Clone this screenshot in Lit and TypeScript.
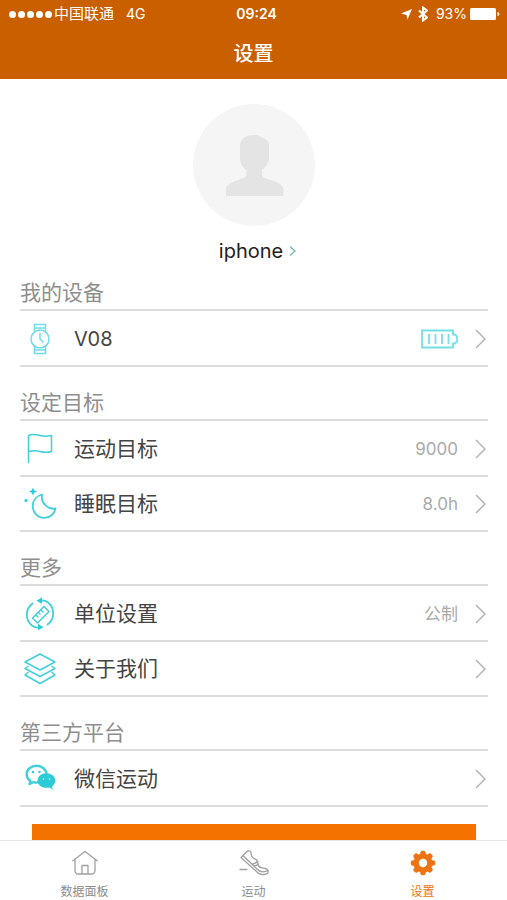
import { LitElement, html, svg, css, nothing, type TemplateResult } from "lit";
import { customElement, property, state } from "lit/decorators.js";
import { classMap } from "lit/directives/class-map.js";

interface Row {
  icon: string;
  label: string;
  value?: string;
  battery?: boolean;
}

interface Group {
  title: string;
  rows: Row[];
}

const groups: Group[] = [
  { title: "我的设备", rows: [{ icon: "watch", label: "V08", battery: true }] },
  {
    title: "设定目标",
    rows: [
      { icon: "flag", label: "运动目标", value: "9000" },
      { icon: "moon", label: "睡眠目标", value: "8.0h" },
    ],
  },
  {
    title: "更多",
    rows: [
      { icon: "ruler", label: "单位设置", value: "公制" },
      { icon: "layers", label: "关于我们" },
    ],
  },
  { title: "第三方平台", rows: [{ icon: "wechat", label: "微信运动" }] },
];

const tabs = [
  { icon: "home", label: "数据面板" },
  { icon: "shoe", label: "运动" },
  { icon: "gear", label: "设置" },
];

const rowIcons: Record<string, TemplateResult> = {
  watch: svg`
    <g class="pale"><circle cx="18" cy="18" r="9"/>
    <path d="M12.500 10.500V3.500h11v7M12.500 25.500v7h11v-7M13 7h10M13 29h10M18 12.500v5.500l3 3"/></g>`,
  flag: svg`
    <path d="M6.500 31.500V4.500c4-1.500 8-1 11.500 0s7.500 1 11.500 0v16c-4 1.200-8 1-11.500 0s-7.500-1-11.500 0"/>`,
  moon: svg`
    <path class="thick" d="M20 8.500c-5.500 1.500-9.300 6-9.300 11.500 0 6.500 5 11.800 11.600 11.800 5.500 0 10-3.700 11.200-9.300-6.500 1.500-15-4.500-13.500-14z"/>
    <path class="solid" d="M11 1.500l1.200 2.800 2.800 1.200-2.800 1.200-1.200 2.800-1.200-2.800L7 5.500l2.800-1.200z"/>
    <circle class="solid" cx="4" cy="14.500" r="1.600"/>`,
  ruler: svg`
    <path class="thick" d="M10.500 7.500C3 13 3 24 10 29.500c2 1.500 4.500 2.300 7 2M25.500 28.500C33 23 33 12 26 6.500c-2-1.500-4.500-2.300-7-2"/>
    <path d="M22 10.500l5 5-11.500 11.500-5-5z"/>
    <path d="M14 19l2 2M16.500 16.500l1.500 1.500M19 14l2 2"/>
    <path class="solid" d="M14.500 4.800l5.500-3.500v6.500zM21.500 31.200l-5.500-3.500v6.500z"/>`,
  layers: svg`
    <path d="M18 3l15 8-15 8-15-8zM6 15.500L3 17.500l15 8 15-8-3-2M6 21.500L3 24l15 8.500L33 24l-3-2.500"/>`,
  wechat: svg`
    <path class="heavy" d="M14.500 4.800c-5.500 0-9.800 3.700-9.800 8.400 0 2.900 1.300 5.100 3.700 6.600l-.9 3.200 3.700-1.900c1.200.3 2.100.5 3.300.5 5.500 0 9.800-3.700 9.800-8.400s-4.300-8.400-9.800-8.400z"/>
    <circle class="solid" cx="11" cy="11" r="1.200"/>
    <circle class="solid" cx="17.500" cy="11" r="1.200"/>
    <path class="solid" d="M24.300 12.300c-5 0-8.800 3.200-8.800 7.200s3.800 7.300 8.800 7.300c1.100 0 2-.1 3-.4l3.500 2-.8-3c2.100-1.300 3.300-3.500 3.300-5.900 0-4-4-7.200-9-7.200z"/>
    <circle class="eye" cx="21.500" cy="18" r=".9"/>
    <circle class="eye" cx="27.500" cy="18" r=".9"/>`,
};

const tabIcons: Record<string, TemplateResult> = {
  home: svg`
    <path d="M2.800 11.800L15 2.500l12.200 9.300M5 10.500v11c0 2.200 1.200 3.500 3.500 3.500h13c2.300 0 3.500-1.300 3.500-3.500v-11M12 25v-8.500h6V25"/>`,
  shoe: svg`
    <path d="M1 20.500h7M2 8.500L8.500 2c2-.5 3.500.5 3.500 2 0 2.500 1 4 2.500 5.200 2 1 3.500 1.500 4 3 .5 1.800-.3 3 1 4.800 1.500 2 4 1.800 7 2.500 2.500.7 3 3 2.200 4.500-.8 1-3 1.500-5.700 1.500-3.500 0-4.500-1.500-6-3.500z"/>
    <path d="M4 6.500L17.500 19.500c2 2.200 3.500 3.300 6 3.300 2.300 0 4-.3 5.300-1.300M13.500 15c1.500-.3 3.500-1 4.700-2.500M15 17c1.500-.2 3-.8 4.200-1.800"/>`,
  gear: svg`
    <path fill-rule="evenodd" d="M15 4.500a9.500 9.500 0 1 0 0 19 9.500 9.500 0 0 0 0-19zm0 5.300a4.200 4.200 0 1 1 0 8.400 4.200 4.200 0 0 1 0-8.400z"/>
    <g>${[0, 45, 90, 135, 180, 225, 270, 315].map(
      (a) => svg`<path d="M12 6l.5-3c.3-1.700 4.700-1.700 5 0l.5 3z" transform="rotate(${a} 15 14)"/>`
    )}</g>`,
};

@customElement("status-bar")
export class StatusBar extends LitElement {
  static styles = css`
    :host {
      display: grid;
      grid-template-columns: 1fr auto 1fr;
      align-items: center;
      height: 28px;
      padding: 0 7px 0 9px;
      font-size: 14px;
      line-height: 20px;
    }
    .side {
      display: flex;
      align-items: center;
    }
    .end {
      justify-content: flex-end;
    }
    .dots {
      display: flex;
      gap: 2px;
      margin-right: 2px;
    }
    .dot {
      width: 7px;
      height: 7px;
      border-radius: 50%;
      background: #fff;
    }
    .carrier {
      font-size: 15px;
      margin-right: 12px;
    }
    .time {
      font-weight: 600;
      margin-left: 4px;
    }
    svg {
      display: block;
      fill: #fff;
    }
    .arrow {
      margin-right: 6px;
    }
    .bluetooth {
      fill: none;
      stroke: #fff;
      stroke-width: 2;
      margin-right: 8px;
    }
    .battery {
      margin-left: 3px;
    }
  `;

  render() {
    return html`
      <div class="side">
        <span class="dots">${[0, 1, 2, 3, 4].map(() => html`<span class="dot"></span>`)}</span>
        <span class="carrier">中国联通</span>
        <span>4G</span>
      </div>
      <span class="time">09:24</span>
      <div class="side end">
        <svg class="arrow" width="11" height="11" viewBox="0 0 11 11"><path d="M11 0L6.500 10.500 5.500 6 0 4.500z"/></svg>
        <svg class="bluetooth" width="10" height="16" viewBox="0 0 10 16"><path d="M1 4.500l8 7L5 14.500v-13l4 3-8 7"/></svg>
        <span>93%</span>
        <svg class="battery" width="30" height="12" viewBox="0 0 30 12"><rect width="26" height="12" rx="1.500"/><path d="M27.500 4c2.500.5 2.500 3.500 0 4z"/></svg>
      </div>
    `;
  }
}

@customElement("setting-row")
export class SettingRow extends LitElement {
  @property({ attribute: false }) row!: Row;

  static styles = css`
    :host {
      display: block;
      border-bottom: 2px solid #dcdcdc;
    }
    button {
      display: flex;
      align-items: center;
      width: 100%;
      height: 53px;
      padding: 0 2px;
      border: 0;
      background: none;
      font: inherit;
      color: #444;
      text-align: left;
      cursor: pointer;
    }
    svg {
      display: block;
      flex: none;
      fill: none;
    }
    .icon {
      stroke: #3fd0dc;
      stroke-width: 1.5;
      stroke-linejoin: round;
      stroke-linecap: round;
    }
    .icon .solid {
      fill: #2bcbd8;
      stroke: none;
    }
    .icon .pale {
      stroke: #6fdbea;
    }
    .icon .thick {
      stroke-width: 1.8;
    }
    .icon .heavy {
      stroke-width: 2.4;
    }
    .icon .eye {
      fill: #a5e9ee;
      stroke: none;
    }
    .label {
      flex: 1;
      margin-left: 16px;
      font-size: 21px;
      line-height: 28px;
    }
    .latin {
      font-size: 20px;
    }
    .value {
      font-size: 17px;
      line-height: 24px;
      color: #aaa;
    }
    .battery {
      stroke: #74dfe7;
      stroke-width: 1.8;
    }
    .chevron {
      margin-left: 17px;
      stroke: #b4b4b4;
      stroke-width: 1.5;
    }
  `;

  render() {
    const { icon, label, value, battery } = this.row;
    const latin = /^[\x20-\x7e]+$/.test(label);
    return html`
      <button type="button">
        <svg class="icon" width="36" height="36" viewBox="0 0 36 36">${rowIcons[icon]}</svg>
        <span class=${classMap({ label: true, latin })}>${label}</span>
        ${battery
          ? html`<svg class="battery" width="37" height="20" viewBox="0 0 37 20">
              <path d="M1 1.500h31v4h2l2 2v5l-2 2h-2v4H1zM8 5v10M14.500 5v10M21 5v10M27.500 5v10"/>
            </svg>`
          : nothing}
        ${value ? html`<span class="value">${value}</span>` : nothing}
        <svg class="chevron" width="11" height="20" viewBox="0 0 11 20"><path d="M1 1l9 9-9 9"/></svg>
      </button>
    `;
  }
}

@customElement("app-root")
export class AppRoot extends LitElement {
  @state() private current = 2;

  static styles = css`
    :host {
      display: flex;
      flex-direction: column;
      height: 100vh;
      background: #fff;
      font-family: Inter, "Noto Sans CJK SC", sans-serif;
      color: #444;
    }
    .top {
      flex: none;
      background: #ca5f00;
      color: #fff;
    }
    h1 {
      margin: 0;
      padding: 12px 0 11px;
      font-size: 20px;
      line-height: 28px;
      font-weight: 500;
      text-align: center;
    }
    main {
      flex: 1;
      min-height: 0;
      overflow-y: auto;
      scrollbar-width: none;
    }
    .profile {
      display: flex;
      flex-direction: column;
      align-items: center;
      gap: 13px;
      padding: 25px 0 15px;
    }
    .name {
      display: flex;
      align-items: center;
      gap: 6px;
      padding: 0;
      border: 0;
      background: none;
      font: inherit;
      font-size: 20px;
      line-height: 24px;
      color: #222;
      margin-left: 8px;
      cursor: pointer;
    }
    .name svg {
      fill: none;
      stroke: #7fb9b6;
      stroke-width: 1.5;
    }
    .avatar {
      display: block;
    }
    .disc {
      fill: #f5f5f5;
    }
    .person {
      fill: #e4e4e4;
    }
    section {
      margin: 0 19px 21px 20px;
    }
    h2 {
      margin: 0;
      padding: 1px 0 2px;
      border-bottom: 2px solid #dcdcdc;
      font-size: 21px;
      line-height: 28px;
      font-weight: 400;
      color: #8e8e8e;
    }
    .rows {
      padding-top: 1px;
    }
    .action {
      padding: 0 31px 16px 32px;
      margin-top: -4px;
    }
    .action button {
      display: block;
      width: 100%;
      height: 52px;
      border: 0;
      background: #f37200;
    }
    nav {
      flex: none;
      display: grid;
      grid-template-columns: repeat(3, 1fr);
      border-top: 1px solid #e6e6e6;
      background: #fff;
    }
    .tab {
      display: flex;
      flex-direction: column;
      align-items: center;
      gap: 7px;
      padding: 8px 0 0;
      border: 0;
      background: none;
      font: inherit;
      font-size: 12px;
      line-height: 16px;
      color: #8c8c8c;
      cursor: pointer;
    }
    .tab svg {
      display: block;
      fill: none;
      stroke: #a0a0a0;
      stroke-width: 1.3;
      stroke-linejoin: round;
      stroke-linecap: round;
    }
    .tab.active {
      color: #ee7413;
    }
    .tab.active svg {
      fill: #ee7413;
      stroke: none;
    }
  `;

  render() {
    return html`
      <header class="top">
        <status-bar></status-bar>
        <h1>设置</h1>
      </header>
      <main>
        <div class="profile">
          <svg class="avatar" width="122" height="122" viewBox="0 0 122 122">
            <circle class="disc" cx="61" cy="61" r="61"/>
            <path class="person" d="M47 41c0-6 6-10 14-10 3 0 5 .3 6.500 2 5.500 1.500 8.500 4 8.500 8v13c0 5-2.500 9-7 12v4.500c0 2 1.500 3 4 4 9 3 17.500 5 17.500 11V92h-57.500v-6.500c0-6 8-8 16.500-11 2.500-1 4-2 4-4V66c-4.500-3-6.500-7-6.500-12z"/>
          </svg>
          <button class="name" type="button">
            iphone
            <svg width="7" height="12" viewBox="0 0 7 12"><path d="M1 1.500L6 6l-5 4.500"/></svg>
          </button>
        </div>
        ${groups.map(
          (g) => html`
            <section>
              <h2>${g.title}</h2>
              <div class="rows">
                ${g.rows.map((r) => html`<setting-row .row=${r}></setting-row>`)}
              </div>
            </section>
          `
        )}
        <div class="action"><button type="button" aria-label="操作"></button></div>
      </main>
      <nav>
        ${tabs.map(
          (t, i) => html`
            <button
              type="button"
              class=${classMap({ tab: true, active: i === this.current })}
              @click=${() => (this.current = i)}
            >
              <svg width="30" height="28" viewBox="0 0 30 28">${tabIcons[t.icon]}</svg>
              ${t.label}
            </button>
          `
        )}
      </nav>
    `;
  }
}
